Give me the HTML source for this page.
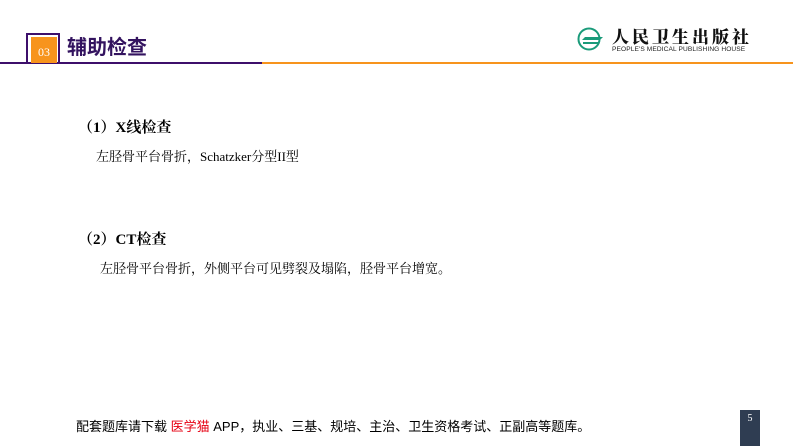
<!DOCTYPE html>
<html><head><meta charset="utf-8"><style>
body{margin:0;width:793px;height:446px;background:#fff;position:relative;overflow:hidden;font-family:"Liberation Serif","Noto Serif CJK SC",serif;}
.a{position:absolute;}
</style></head><body>
<div class="a" style="left:0;top:62px;width:262px;height:2px;background:#3d0f6b"></div>
<div class="a" style="left:262px;top:62px;width:531px;height:2px;background:#f7941d"></div>
<div class="a" style="left:26px;top:33px;width:30px;height:29px;border:2px solid #3d0f6b;border-bottom:none"></div>
<div class="a" style="left:31px;top:37px;width:26px;height:26px;background:#f7941d;color:#fff;font-size:12px;line-height:30px;text-align:center">03</div>
<div class="a" style="left:67px;top:35px;font-family:'Liberation Sans','Noto Sans CJK SC',sans-serif;font-weight:bold;font-size:20px;color:#33135f;line-height:26px">辅助检查</div>
<svg class="a" style="left:577px;top:27px" width="28" height="24" viewBox="0 0 28 24"><circle cx="12" cy="12" r="10.5" fill="none" stroke="#1a9b7a" stroke-width="2"/><path d="M5 13h18l3-3H8z" fill="#1a9b7a"/><path d="M6 15h16v2H6z" fill="#1a9b7a"/></svg>
<div class="a" style="left:612px;top:27px;font-family:'Noto Serif CJK SC',serif;font-weight:900;font-size:17px;letter-spacing:3px;line-height:18px;color:#111">人民卫生出版社</div>
<div class="a" style="left:612px;top:46px;font-family:'Liberation Sans',sans-serif;font-size:6.6px;color:#222;letter-spacing:0.1px">PEOPLE'S MEDICAL PUBLISHING HOUSE</div>
<div class="a" style="left:78px;top:116px;font-weight:bold;font-size:15px;color:#000">（1）X线检查</div>
<div class="a" style="left:96px;top:146px;font-size:13px;color:#000">左胫骨平台骨折，Schatzker分型II型</div>
<div class="a" style="left:78px;top:228px;font-weight:bold;font-size:15px;color:#000">（2）CT检查</div>
<div class="a" style="left:100px;top:258px;font-size:13px;color:#000">左胫骨平台骨折，外侧平台可见劈裂及塌陷，胫骨平台增宽。</div>
<div class="a" style="left:76px;top:416px;font-family:'Liberation Sans','Noto Sans CJK SC',sans-serif;font-size:13px;color:#000">配套题库请下载 <span style="color:#e60012">医学猫</span> APP，执业、三基、规培、主治、卫生资格考试、正副高等题库。</div>
<div class="a" style="left:740px;top:410px;width:20px;height:36px;background:#2f3d52;color:#fff;font-size:10px;text-align:center;line-height:18px">5</div>
</body></html>
